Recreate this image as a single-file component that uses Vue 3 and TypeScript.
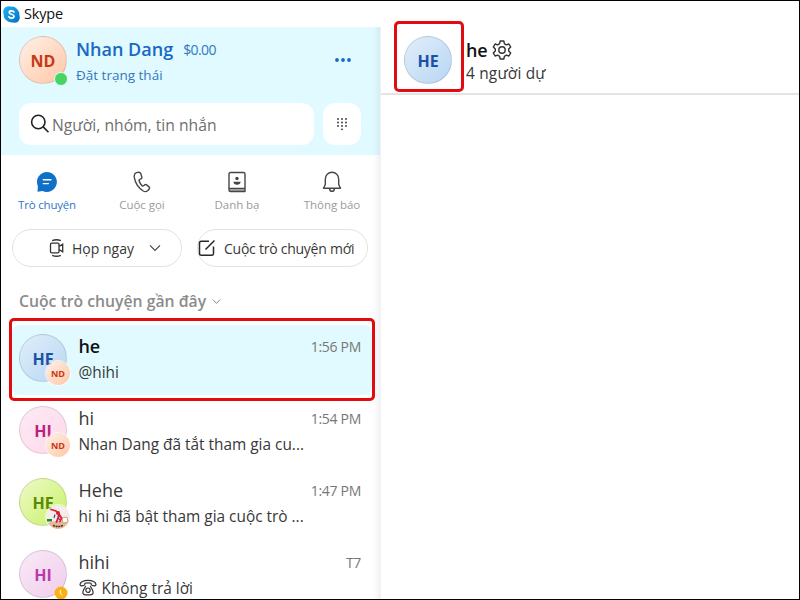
<script setup lang="ts">
interface Tab {
  id: 'talk' | 'call' | 'contacts' | 'bell'
  label: string
}

interface Chat {
  id: number
  initials: string
  tone: string
  badge: 'nd' | 'photo' | 'away'
  name: string
  time: string
  message: string
  active?: boolean
  missed?: boolean
}

const tabs: Tab[] = [
  { id: 'talk', label: 'Trò chuyện' },
  { id: 'call', label: 'Cuộc gọi' },
  { id: 'contacts', label: 'Danh bạ' },
  { id: 'bell', label: 'Thông báo' },
]

const chats: Chat[] = [
  { id: 1, initials: 'HE', tone: 'blue', badge: 'nd', name: 'he', time: '1:56 PM', message: '@hihi', active: true },
  { id: 2, initials: 'HI', tone: 'pink', badge: 'nd', name: 'hi', time: '1:54 PM', message: 'Nhan Dang đã tắt tham gia cu...' },
  { id: 3, initials: 'HE', tone: 'green', badge: 'photo', name: 'Hehe', time: '1:47 PM', message: 'hi hi đã bật tham gia cuộc trò ...' },
  { id: 4, initials: 'HI', tone: 'violet', badge: 'away', name: 'hihi', time: 'T7', message: 'Không trả lời', missed: true },
]
</script>

<template>
  <div class="window">
    <header class="titlebar">
      <svg class="logo" viewBox="0 0 17 17">
        <defs>
          <linearGradient id="sk" x1="0" y1="0" x2="1" y2="1">
            <stop offset="0" stop-color="#1fb0ee" />
            <stop offset="1" stop-color="#0672c8" />
          </linearGradient>
        </defs>
        <circle cx="5.4" cy="5.4" r="5.2" fill="#1fabe9" />
        <circle cx="11.6" cy="11.6" r="5.2" fill="#0a78cc" />
        <circle cx="8.5" cy="8.5" r="7.9" fill="url(#sk)" />
        <path d="M11 6C10.400 4.700 6.300 4.300 6.200 6.500C6.200 8.700 11 7.800 11 10.300C10.900 12.700 6.500 12.400 5.900 10.700" fill="none" stroke="#fff" stroke-width="1.700" stroke-linecap="round" />
      </svg>
      <span class="app-name">Skype</span>
    </header>

    <div class="body">
      <aside class="sidebar">
        <section class="profile">
          <div class="me">
            <div class="avatar orange">ND<i class="online"></i></div>
            <div class="me-text">
              <div class="me-line"><strong class="me-name">Nhan Dang</strong><span class="credit">$0.00</span></div>
              <div class="status">Đặt trạng thái</div>
            </div>
            <svg class="more" viewBox="0 0 18 6"><circle cx="3" cy="3" r="1.900" /><circle cx="9" cy="3" r="1.900" /><circle cx="15" cy="3" r="1.900" /></svg>
          </div>
          <div class="search-row">
            <div class="search">
              <svg class="search-icon" viewBox="0 0 20 20"><circle cx="8.300" cy="8" r="6.700" /><path d="M13.200 12.900L18.500 18.200" /></svg>
              <span class="placeholder">Người, nhóm, tin nhắn</span>
            </div>
            <div class="dial">
              <svg viewBox="0 0 12 14">
                <g fill="#333">
                  <circle cx="2" cy="2" r=".9" /><circle cx="6" cy="2" r=".9" /><circle cx="10" cy="2" r=".9" />
                  <circle cx="2" cy="5.500" r=".9" /><circle cx="6" cy="5.500" r=".9" /><circle cx="10" cy="5.500" r=".9" />
                  <circle cx="2" cy="9" r=".9" /><circle cx="6" cy="9" r=".9" /><circle cx="10" cy="9" r=".9" />
                  <circle cx="6" cy="12.300" r=".9" />
                </g>
              </svg>
            </div>
          </div>
        </section>

        <nav class="tabs">
          <div v-for="t in tabs" :key="t.id" class="tab" :class="{ on: t.id === 'talk' }">
            <svg v-if="t.id === 'talk'" viewBox="0 0 22 22">
              <path d="M11 1A10 10 0 1 1 6.500 20L1.500 20.800L1.900 15.200A10 10 0 0 1 11 1Z" fill="#1070c8" />
              <path d="M7.300 8.800H15M7.300 12.600H12.400" stroke="#fff" stroke-width="1.400" stroke-linecap="round" />
            </svg>
            <svg v-else-if="t.id === 'call'" viewBox="0 0 22 22" class="line">
              <path d="M5.300 1.600C3.600 2.300 3 4.200 3.300 6.400C4.300 12.300 8 17.300 12.300 20C14 21 15.600 20.700 16.800 19.500L18 18.200C18.700 17.500 18.700 16.500 18 15.900L15.600 13.900C15 13.400 14.100 13.400 13.500 13.900L12.500 14.800C12 15.200 11.500 15.200 11 14.700C9.600 13.200 8.600 11.600 8.100 9.800C7.900 9.200 8.200 8.700 8.800 8.400L10 7.900C10.700 7.600 11 6.800 10.800 6.100L9.900 2.800C9.600 1.800 8.600 1.200 7.600 1.200C6.800 1.200 6 1.300 5.300 1.600Z" />
            </svg>
            <svg v-else-if="t.id === 'contacts'" viewBox="0 0 22 22" class="line">
              <path d="M3.500 18.200H19V20H4Z" class="page" />
              <path d="M4.500 1.500H17.500Q19 1.500 19 3V20.500H4.500Q3 20.500 3 19V3Q3 1.500 4.500 1.500ZM3 18Q3.300 17.500 4.500 17.500H19" />
              <circle cx="11" cy="7.500" r="1.700" class="solid" /><path d="M7.300 10.700H14.700Q14.300 13.700 11 13.700T7.300 10.700Z" class="solid" />
            </svg>
            <svg v-else viewBox="0 0 22 22" class="line">
              <path d="M2.500 17.300H19.500L17.700 13.500V8.200C17.700 4.200 14.800 1.300 11 1.300S4.300 4.200 4.300 8.200V13.500ZM8.600 17.600C8.800 21.300 13.200 21.300 13.400 17.600" />
            </svg>
            <span>{{ t.label }}</span>
          </div>
        </nav>

        <div class="actions">
          <div class="pill meet">
            <svg class="cam" viewBox="0 0 16 20"><path d="M2.700 5.200H8.800Q10 5.200 10 6.400V13.600Q10 14.800 8.800 14.800H2.700Q1.500 14.800 1.500 13.600V6.400Q1.500 5.200 2.700 5.200ZM10 8.500L13.700 6.200V13.800L10 11.500M3.200 2.700Q7.500 .8 11.800 2.700M3.200 17.300Q7.500 19.200 11.800 17.300" /></svg>
            <span>Họp ngay</span>
            <svg class="chev" viewBox="0 0 12 8"><path d="M1 1.300L6 6.500L11 1.300" /></svg>
          </div>
          <div class="pill new">
            <svg class="edit" viewBox="0 0 18 18"><path d="M11 2.200H3.300Q1.500 2.200 1.500 4V14.500Q1.500 16.200 3.300 16.200H13.800Q15.500 16.200 15.500 14.500V7.500M7.500 10.500L16.500 1.500" /></svg>
            <span>Cuộc trò chuyện mới</span>
          </div>
        </div>

        <div class="recent"><span>Cuộc trò chuyện gần đây</span><svg viewBox="0 0 12 8"><path d="M1 1.300L6 6.500L11 1.300" /></svg></div>

        <ul class="chats">
          <li v-for="c in chats" :key="c.id" class="chat" :class="{ active: c.active }">
            <div class="avatar" :class="c.tone">
              {{ c.initials }}
              <i v-if="c.badge === 'nd'" class="mini orange">ND</i>
              <svg v-else-if="c.badge === 'photo'" class="mini" viewBox="0 0 24 24">
                <circle cx="12" cy="12" r="12" fill="#f4edeb" />
                <path d="M2 18Q12 14 22 18Q18 24 12 24T2 18Z" fill="#eab794" />
                <path d="M1 14H6V16.500H1Z" fill="#27803d" />
                <path d="M16 13L21 12L22 17L17 18Z" fill="#fff" stroke="#d5a27c" stroke-width="1" />
                <path d="M5 4.500L10 6L13 9L12 13L10.500 17M13 9L15.500 13L14 16.500" fill="none" stroke="#d61f32" stroke-width="1.800" stroke-linecap="round" />
                <path d="M9 9.500L8 13M12.500 12.500L13.500 15" stroke="#3947a0" stroke-width="1.200" />
                <circle cx="12" cy="8" r="2" fill="#dc1b2c" />
                <path d="M7 20.500Q12 22.500 17 20.500" fill="none" stroke="#433" stroke-width="1.500" stroke-dasharray="2 .7" />
              </svg>
              <svg v-else class="away" viewBox="0 0 14 14"><circle cx="7" cy="7" r="6.500" /><path d="M6.300 4V7.500L8.500 9" /></svg>
            </div>
            <div class="chat-text">
              <div class="top"><span class="name">{{ c.name }}</span><time>{{ c.time }}</time></div>
              <div class="message">
                <svg v-if="c.missed" class="phone" viewBox="0 0 18 17">
                  <path d="M1 5.700C.8 0 17.200 0 17 5.700Q16.800 7 15.500 6.800L13 6.300Q12 6 12 4.300Q9 3.400 6 4.300Q6 6 5 6.300L2.500 6.800Q1.200 7 1 5.700ZM6.800 7L4.500 11Q2.500 15.800 6.500 15.800H11.500Q15.500 15.800 13.500 11L11.200 7" />
                  <circle cx="9" cy="11.200" r="2.200" />
                </svg>
                <span>{{ c.message }}</span>
              </div>
            </div>
          </li>
        </ul>
      </aside>

      <main class="conversation">
        <header class="conv-head">
          <div class="avatar blue">HE</div>
          <div class="conv-text">
            <div class="conv-title">
              <strong>he</strong>
              <svg viewBox="0 0 20 20">
                <path d="M8.200 1H11.800L12.400 3.700L14.300 4.800L16.900 4L18.700 7.100L16.700 9V11L18.700 12.900L16.900 16L14.300 15.200L12.400 16.300L11.800 19H8.200L7.600 16.300L5.700 15.200L3.100 16L1.300 12.900L3.300 11V9L1.300 7.100L3.100 4L5.700 4.800L7.600 3.700Z" />
                <circle cx="10" cy="10" r="3.200" />
              </svg>
            </div>
            <div class="people">4 người dự</div>
          </div>
        </header>
      </main>
    </div>
    <div class="mark mark-chat"></div>
    <div class="mark mark-avatar"></div>
  </div>
</template>

<style>
body { margin: 0; background: #fff; }
</style>

<style scoped>
* { box-sizing: border-box; }
.window {
  position: relative; width: 800px; height: 600px; overflow: hidden;
  display: flex; flex-direction: column; background: #fff; border: 1px solid #000;
  font-family: "Open Sans", "Noto Sans", sans-serif; color: #383838; white-space: nowrap;
}
svg { display: block; flex: none; fill: none; }
.titlebar { height: 26px; flex: none; display: flex; align-items: center; padding-left: 2px; gap: 4px; }
.logo { width: 17px; height: 17px; }
.app-name { font-size: 14.500px; letter-spacing: -.2px; color: #111; line-height: 20px; }
.body { flex: 1; display: flex; min-height: 0; }
.sidebar { position: relative; width: 380px; flex: none; overflow: hidden; display: flex; flex-direction: column; }
.sidebar::after { content: ""; position: absolute; top: 0; right: 0; bottom: 0; width: 8px; background: linear-gradient(90deg, transparent, rgba(0, 0, 0, .06)); }
.profile { height: 128px; flex: none; background: #e0faff; padding: 9px 18px 0; margin-right: 1px; }
.me { display: flex; height: 48px; }
.avatar {
  position: relative; width: 48px; height: 48px; flex: none; border-radius: 50%;
  display: flex; align-items: center; justify-content: center; padding-top: 2px;
  font-size: 16px; font-weight: 700; border: 1px solid rgba(60, 60, 80, .14);
}
.orange { background: linear-gradient(135deg, #fff0e8, #ffc7a6); color: #c53a16; }
.blue { background: linear-gradient(135deg, #e1effa, #b7d6f3); color: #1b50a9; }
.pink { background: linear-gradient(135deg, #fdeaf4, #ffd8ea); color: #bb2181; }
.green { background: linear-gradient(135deg, #effac9, #c6f166); color: #5b8a08; }
.violet { background: linear-gradient(135deg, #faeaf6, #efcdec); color: #b83bad; }
.online { position: absolute; right: -2px; bottom: -3px; width: 14px; height: 14px; border: 1px solid #e0faff; border-radius: 50%; background: #47d462; }
.me-text { margin-left: 9px; flex: 1; }
.me-line { display: flex; height: 26px; align-items: center; gap: 10px; }
.me-name { color: #1769c2; font-size: 18px; font-weight: 600; }
.credit { color: #3477bd; font-size: 14px; letter-spacing: -.6px; }
.status { color: #3477bd; font-size: 13.500px; line-height: 27px; }
.more { width: 18px; height: 6px; margin: 21px 10px 0 0; fill: #1769c2; }
.search-row { display: flex; gap: 9px; margin-top: 19px; }
.search { width: 295px; height: 42px; background: #fff; border-radius: 12px; display: flex; align-items: center; padding-left: 11px; gap: 2px; }
.search-icon { width: 20px; height: 20px; stroke: #222; stroke-width: 1.600; }
.placeholder { font-size: 15.700px; color: #707070; padding-top: 2px; }
.dial { width: 38px; height: 42px; border-radius: 12px; background: #fff; display: flex; justify-content: center; align-items: center; }
.dial svg { width: 12px; height: 14px; }
.tabs { display: grid; grid-template-columns: repeat(4, 95px); height: 74px; flex: none; padding-top: 16px; margin-left: -1.500px; }
.tab { display: flex; flex-direction: column; align-items: center; color: #9b9b9b; font-size: 11.500px; letter-spacing: -.05px; }
.tab svg { width: 22px; height: 22px; }
.tab span { line-height: 23px; }
.tab.on { color: #2f75c8; letter-spacing: -.2px; }
.line { stroke: #464646; stroke-width: 1.400; stroke-linejoin: round; }
.solid { fill: #464646; stroke: none; }
.page { fill: #aaa; stroke: none; }
.actions { display: flex; padding-left: 11px; gap: 15px; height: 39px; flex: none; }
.pill { height: 38px; border: 1px solid #e3e3e3; border-radius: 19px; display: flex; align-items: center; font-size: 14px; }
.meet { width: 170px; padding-left: 36px; }
.cam { width: 16px; height: 20px; stroke: #333; stroke-width: 1.300; margin-right: 7px; }
.chev { width: 12px; height: 8px; stroke: #444; stroke-width: 1.100; margin-left: 15px; }
.new { width: 171px; gap: 8px; letter-spacing: -.25px; }
.edit { width: 18px; height: 18px; stroke: #282828; stroke-width: 1.500; }
.recent { display: flex; align-items: center; height: 54px; flex: none; padding: 12px 0 0 18px; gap: 6px; font-size: 15.750px; font-weight: 600; color: #8b8b8b; }
.recent svg { width: 9px; height: 7px; stroke: #858585; stroke-width: 1.300; }
.chats { position: relative; z-index: 0; list-style: none; padding: 0; margin: 0; }
.chat { display: flex; height: 72px; margin: 0 9px 0 11px; padding: 12px 11px 0 7px; }
.chat.active { position: relative; }
.chat.active::before { content: ""; position: absolute; z-index: -1; inset: 3px 0 -1px; border-radius: 8px; background: #e0faff; }
.mini { position: absolute; right: -4px; bottom: -4px; width: 24px; height: 24px; border-radius: 50%; display: flex; align-items: center; justify-content: center; font-size: 9px; font-style: normal; border: 0; box-shadow: 0 0 0 1px #fff9; }
.away { position: absolute; width: 14px; height: 14px; right: -2px; bottom: -3px; }
.away circle { fill: #f9b216; }
.away path { stroke: #fff; }
.chat-text { margin-left: 11.500px; flex: 1; min-width: 0; }
.top { display: flex; height: 24px; justify-content: space-between; align-items: center; }
.name { font-size: 18px; }
.active .name { font-weight: 600; color: #111; letter-spacing: -.3px; }
time { font-size: 14px; color: #777; letter-spacing: -.3px; }
.message { display: flex; align-items: center; gap: 5px; height: 28px; font-size: 15.400px; }
.phone { width: 18px; height: 17px; stroke: #333; stroke-width: 1.200; margin-top: -2px; }
.conversation { flex: 1; min-width: 0; }
.conv-head { height: 68px; border-bottom: 2px solid #e4e4e4; display: flex; padding: 9px 0 0 23px; }
.conv-text { margin-left: 14px; }
.conv-title { display: flex; align-items: center; height: 27px; gap: 5px; }
.conv-title strong { font-weight: 600; font-size: 18px; color: #111; letter-spacing: -.3px; }
.conv-title svg { width: 20px; height: 20px; stroke: #333; stroke-width: 1.400; stroke-linejoin: round; }
.people { font-size: 15.400px; line-height: 21px; letter-spacing: .2px; }
.mark { position: absolute; border: 3px solid #e10c10; border-radius: 5px; }
.mark-chat { left: 8px; top: 317px; width: 366px; height: 83px; }
.mark-avatar { left: 393px; top: 20px; width: 70px; height: 71px; }
</style>
